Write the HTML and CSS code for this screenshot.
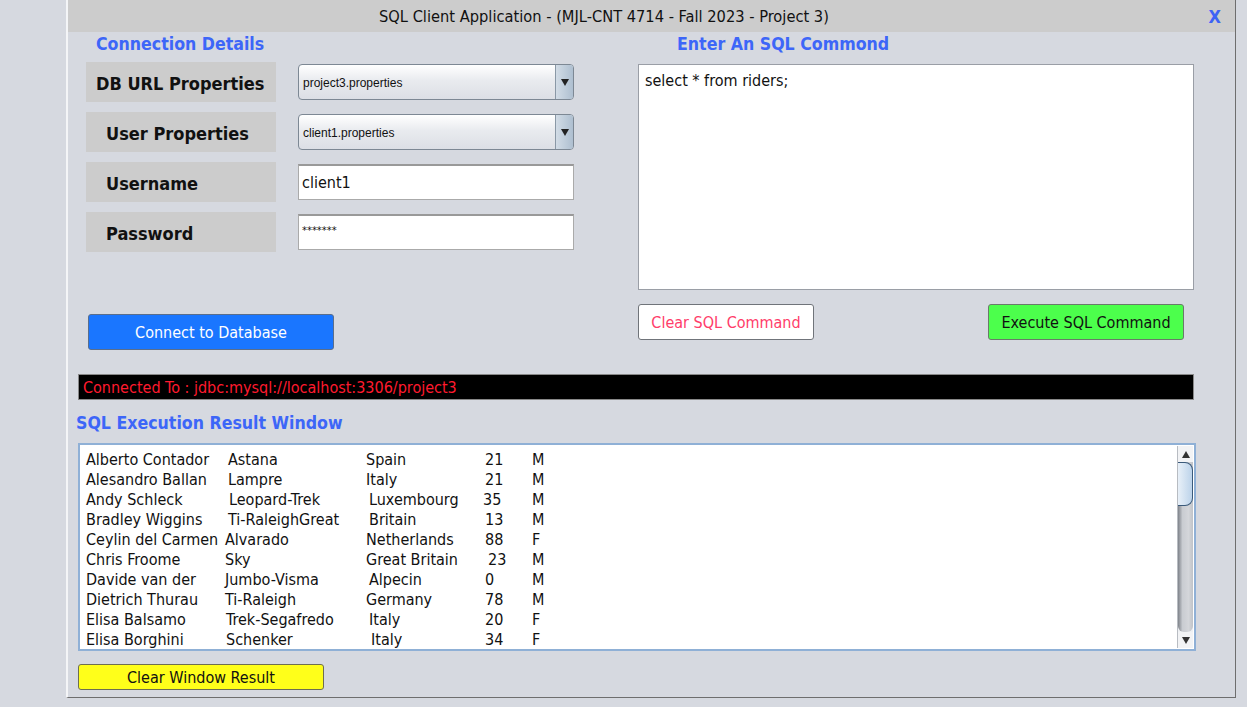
FILE: index.html
```html
<!DOCTYPE html>
<html>
<head>
<meta charset="utf-8">
<link rel="stylesheet" href="styles.css">
</head>
<body>
<div class="window">
  <div class="titlebar">
    <span class="title">SQL Client Application - (MJL-CNT 4714 - Fall 2023 - Project 3)</span>
    <span class="close">X</span>
  </div>
  <div class="top">
    <div class="left">
      <div class="heading h-conn">Connection Details</div>
      <div class="row">
        <div class="label l-db">DB URL Properties</div>
        <div class="combo"><span class="combo-text">project3.properties</span><span class="combo-btn"><span class="tri"></span></span></div>
      </div>
      <div class="row">
        <div class="label l-user">User Properties</div>
        <div class="combo"><span class="combo-text">client1.properties</span><span class="combo-btn"><span class="tri"></span></span></div>
      </div>
      <div class="row">
        <div class="label l-name">Username</div>
        <div class="field">client1</div>
      </div>
      <div class="row">
        <div class="label l-name">Password</div>
        <div class="field pw">*******</div>
      </div>
      <div class="btn btn-connect">Connect to Database</div>
    </div>
    <div class="right">
      <div class="heading h-sql">Enter An SQL Commond</div>
      <div class="sqlbox">select * from riders;</div>
      <div class="btnrow">
        <div class="btn btn-clear">Clear SQL Command</div>
        <div class="btn btn-exec">Execute SQL Command</div>
      </div>
    </div>
  </div>
  <div class="status">Connected To : jdbc:mysql://localhost:3306/project3</div>
  <div class="heading h-res">SQL Execution Result Window</div>
  <div class="result">
    <div class="rows">
      <div class="r"><span>Alberto Contador</span><span>Astana</span><span>Spain</span><span>21</span><span>M</span></div>
      <div class="r"><span>Alesandro Ballan</span><span>Lampre</span><span>Italy</span><span>21</span><span>M</span></div>
      <div class="r"><span>Andy Schleck</span><span class="s1">Leopard-Trek</span><span class="s3">Luxembourg</span><span class="m2">35</span><span>M</span></div>
      <div class="r"><span>Bradley Wiggins</span><span>Ti-RaleighGreat</span><span class="s3">Britain</span><span>13</span><span>M</span></div>
      <div class="r"><span>Ceylin del Carmen</span><span class="m3">Alvarado</span><span>Netherlands</span><span>88</span><span>F</span></div>
      <div class="r"><span>Chris Froome</span><span class="m3">Sky</span><span>Great Britain</span><span class="s3">23</span><span>M</span></div>
      <div class="r"><span>Davide van der</span><span class="m3">Jumbo-Visma</span><span class="s3">Alpecin</span><span>0</span><span>M</span></div>
      <div class="r"><span>Dietrich Thurau</span><span class="m3">Ti-Raleigh</span><span>Germany</span><span>78</span><span>M</span></div>
      <div class="r"><span>Elisa Balsamo</span><span class="m2">Trek-Segafredo</span><span class="s3">Italy</span><span>20</span><span>F</span></div>
      <div class="r"><span>Elisa Borghini</span><span class="m2">Schenker</span><span class="s5">Italy</span><span>34</span><span>F</span></div>
    </div>
    <div class="scrollbar">
      <div class="arrow up"></div>
      <div class="track"><div class="thumb"></div></div>
      <div class="arrow down"></div>
    </div>
  </div>
  <div class="btn btn-clearwin">Clear Window Result</div>
</div>
</body>
</html>
```
FILE: styles.css
```css
* { box-sizing: border-box; }
body {
  margin: 0;
  background: #d6d9e0;
  font-family: "DejaVu Sans Condensed", "DejaVu Sans", sans-serif;
  width: 1247px;
  height: 707px;
  overflow: hidden;
}
.window {
  margin-left: 66px;
  width: 1170px;
  height: 698px;
  border-left: 2px solid #f4f5f7;
  border-right: 1px solid #6e6e6e;
  border-bottom: 1px solid #6e6e6e;
  background: #d6d9e0;
}
.titlebar {
  height: 32px;
  background: #cccccc;
  display: flex;
  align-items: center;
  position: relative;
}
.title {
  margin-left: 311px;
  font-size: 16.3px;
  color: #111;
}
.close {
  margin-left: auto;
  margin-right: 14px;
  color: #3d63f5;
  font-weight: bold;
  font-size: 18px;
}
.heading {
  color: #3d66f8;
  font-weight: bold;
  font-size: 17.6px;
}
.top {
  display: flex;
}
.left {
  width: 552px;
  padding-left: 18px;
  display: flex;
  flex-direction: column;
}
.h-conn {
  height: 30px;
  line-height: 24px;
  padding-left: 10px;
}
.row {
  display: flex;
  align-items: center;
  height: 40px;
  margin-bottom: 10px;
}
.label {
  width: 190px;
  height: 40px;
  background: #cccccc;
  font-weight: bold;
  font-size: 18px;
  color: #111;
  display: flex;
  align-items: center;
  padding-top: 2px;
}
.l-db { padding-left: 10px; }
.l-user { padding-left: 20px; }
.l-name { padding-left: 20px; }
.combo {
  margin-left: 22px;
  width: 276px;
  height: 36px;
  border: 1px solid #7d8894;
  border-radius: 4px;
  background: linear-gradient(#ffffff, #e9ebef 45%, #dcdfe5);
  display: flex;
  overflow: hidden;
}
.combo-text {
  flex: 1;
  font-family: "Liberation Sans", Arial, sans-serif;
  font-size: 12px;
  color: #111;
  display: flex;
  align-items: center;
  padding-left: 4px;
  padding-top: 2px;
}
.combo-btn {
  width: 18px;
  border-left: 1px solid #8a98a6;
  background: linear-gradient(90deg, #d2dce6, #aebfd0);
  display: flex;
  align-items: center;
  justify-content: center;
}
.tri {
  width: 0; height: 0;
  border-left: 4px solid transparent;
  border-right: 4px solid transparent;
  border-top: 7px solid #222;
}
.field {
  margin-left: 22px;
  width: 276px;
  height: 36px;
  background: #fff;
  border: 1px solid #aaaaaa;
  border-top: 2px solid #999;
  font-size: 16px;
  color: #111;
  display: flex;
  align-items: center;
  padding-left: 3px;
}
.field.pw {
  font-size: 11px;
  padding-bottom: 4px;
}
.btn {
  display: flex;
  align-items: center;
  justify-content: center;
  font-size: 16px;
  border-radius: 3px;
}
.btn-connect {
  margin-top: 52px;
  margin-left: 2px;
  width: 246px;
  height: 36px;
  background: #1a76ff;
  border: 1px solid #5a6e8c;
  color: #fff;
}
.right {
  width: 556px;
  margin-left: 18px;
  display: flex;
  flex-direction: column;
}
.h-sql {
  height: 32px;
  line-height: 24px;
  padding-left: 39px;
}
.sqlbox {
  height: 226px;
  background: #fff;
  border: 1px solid #9a9ea6;
  font-size: 16px;
  padding: 6px 6px;
  color: #111;
}
.btnrow {
  display: flex;
  justify-content: space-between;
  margin-top: 14px;
  padding-right: 10px;
}
.btn-clear {
  width: 176px;
  height: 36px;
  background: #fff;
  border: 1px solid #70747a;
  color: #ff3d6a;
}
.btn-exec {
  width: 196px;
  height: 36px;
  background: #4cff4c;
  border: 1px solid #6a7a6a;
  color: #111;
}
.status {
  margin-top: 24px;
  margin-left: 10px;
  width: 1116px;
  height: 26px;
  background: #000;
  border: 1px solid #888;
  color: #ff1a2e;
  font-size: 16px;
  display: flex;
  align-items: center;
  padding-left: 4px;
}
.h-res {
  margin-left: 8px;
  height: 43px;
  line-height: 46px;
}
.result {
  margin-left: 10px;
  width: 1118px;
  height: 208px;
  border: 2px solid #8fb0d6;
  background: #fff;
  display: flex;
  position: relative;
}
.rows {
  flex: 1;
  padding-top: 5px;
  padding-left: 6px;
}
.r {
  display: grid;
  grid-template-columns: 142px 138px 119px 47px 40px;
  height: 20px;
  line-height: 20px;
  font-size: 16px;
  color: #111;
  white-space: nowrap;
}
.r span { display: block; }
.s1 { margin-left: 1px; }
.s3 { margin-left: 3px; }
.s5 { margin-left: 5px; }
.m2 { margin-left: -2px; }
.m3 { margin-left: -3px; }
.scrollbar {
  width: 16px;
  margin: 1px 1px 1px 0;
  display: flex;
  flex-direction: column;
  background: #eef0f3;
  border-left: 1px solid #b8bcc2;
}
.arrow {
  height: 16px;
  display: flex;
  align-items: center;
  justify-content: center;
  background: #f2f3f5;
}
.arrow.up::after {
  content: "";
  border-left: 4px solid transparent;
  border-right: 4px solid transparent;
  border-bottom: 7px solid #333;
}
.arrow.down::after {
  content: "";
  border-left: 4px solid transparent;
  border-right: 4px solid transparent;
  border-top: 7px solid #333;
}
.track {
  flex: 1;
  background: linear-gradient(90deg, #7f838a, #c9ccd1 30%, #d4d6da 70%, #c0c3c8);
  border-radius: 0 0 6px 6px;
}
.thumb {
  height: 44px;
  background: linear-gradient(90deg, #e8f0f8, #bcd3ea);
  border: 1px solid #3b5a7a;
  border-radius: 0 8px 8px 0;
  border-left: none;
}
.btn-clearwin {
  margin-top: 13px;
  margin-left: 10px;
  width: 246px;
  height: 26px;
  background: #ffff1a;
  border: 1px solid #6e6e50;
  color: #111;
  font-size: 16px;
}
```
